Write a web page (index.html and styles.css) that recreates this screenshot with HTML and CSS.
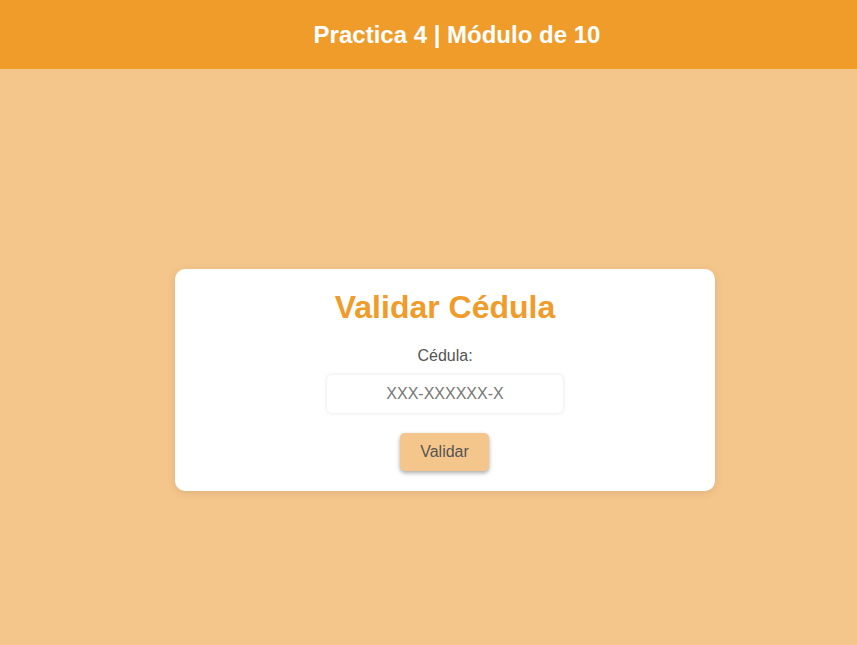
FILE: index.html
```html
<!DOCTYPE html>
<html lang="es">
<head>
<meta charset="utf-8">
<title>Practica 4</title>
<link rel="stylesheet" href="styles.css">
</head>
<body>
<header class="top">
  <h2 class="top-title">Practica 4 | Módulo de 10</h2>
</header>
<main class="main">
  <section class="card">
    <h1 class="card-title">Validar Cédula</h1>
    <label class="label" for="cedula">Cédula:</label>
    <input class="field" id="cedula" type="text" placeholder="XXX-XXXXXX-X">
    <button class="btn" type="button">Validar</button>
  </section>
</main>
</body>
</html>
```

FILE: styles.css
```css
* { box-sizing: border-box; }
html, body {
  margin: 0;
  height: 100%;
}
body {
  background: #f5c68b;
  font-family: "Liberation Sans", Arial, sans-serif;
  color: #555;
}
.top {
  height: 69px;
  background: #ef9c2a;
  display: flex;
  align-items: center;
  justify-content: center;
  padding-left: 57px;
}
.top-title {
  margin: 0;
  color: #fff;
  font-size: 24px;
  font-weight: bold;
}
.main {
  display: flex;
  justify-content: center;
  padding-top: 200px;
  padding-left: 33px;
}
.card {
  width: 540px;
  background: #fff;
  border-radius: 10px;
  box-shadow: 0 2px 8px rgba(0,0,0,0.1);
  padding: 20px 20px 20px;
  display: flex;
  flex-direction: column;
  align-items: center;
}
.card-title {
  margin: 0;
  font-size: 32px;
  line-height: 37px;
  color: #ef9c2a;
}
.label {
  margin-top: 21px;
  font-size: 16px;
  line-height: 18px;
  color: #555;
}
.field {
  margin-top: 10px;
  width: 236px;
  height: 38px;
  border: none;
  border-radius: 5px;
  box-shadow: 0 0 4px rgba(0,0,0,0.12);
  font-family: "Liberation Sans", Arial, sans-serif;
  font-size: 16px;
  text-align: center;
  color: #555;
  padding: 0 8px;
  outline: none;
}
.field::placeholder { color: #777; }
.btn {
  margin-top: 20px;
  margin-right: 1px;
  width: 89px;
  height: 38px;
  border: none;
  border-radius: 5px;
  background: #f5c68b;
  color: #555;
  font-family: "Liberation Sans", Arial, sans-serif;
  font-size: 16px;
  box-shadow: 0 2px 4px rgba(0,0,0,0.35);
  cursor: pointer;
}
```
